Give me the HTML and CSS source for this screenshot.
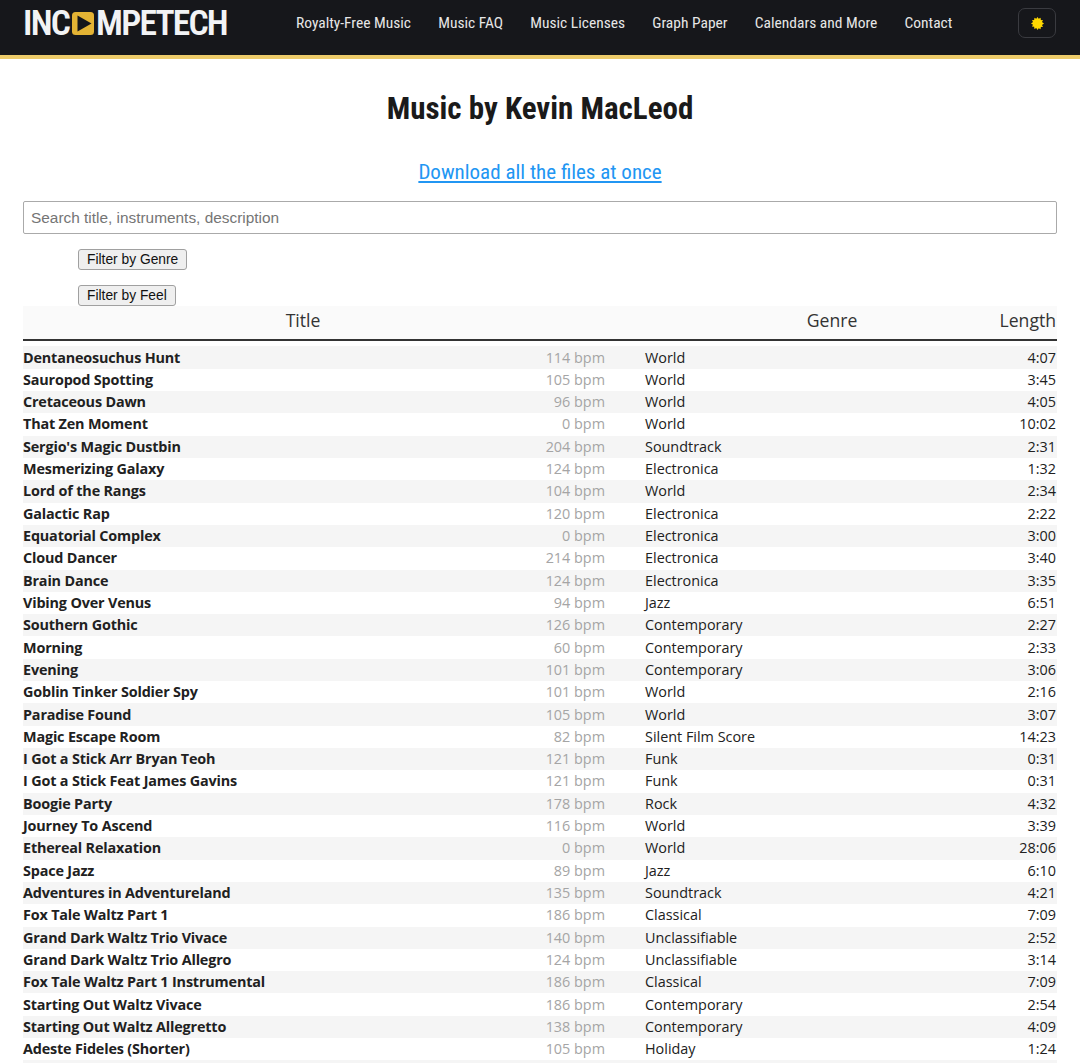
FILE: index.html
```html
<!DOCTYPE html>
<html lang="en">
<head>
<meta charset="utf-8">
<title>Music by Kevin MacLeod</title>
<link rel="stylesheet" href="styles.css">
</head>
<body>
<header class="topbar">
  <a class="logo" href="#"><span class="logo-text">INC</span><svg class="logo-o" viewBox="0 0 22 23" width="22" height="23"><rect width="22" height="23" rx="3.500" fill="#e3b334"/><path d="M5.500 3.500 L19.500 11.500 L5.500 19.500 Z" fill="#15161a"/></svg><span class="logo-text">MPETECH</span></a>
  <nav class="nav">
    <a href="#">Royalty-Free Music</a>
    <a href="#">Music FAQ</a>
    <a href="#">Music Licenses</a>
    <a href="#">Graph Paper</a>
    <a href="#">Calendars and More</a>
    <a href="#">Contact</a>
  </nav>
  <button class="theme" type="button"><svg viewBox="0 0 14 14" width="13" height="13"><path fill="#ffd800" d="M7 0l1.300 2 2-1.200.3 2.400 2.400.3L11.800 5.500 14 7l-2.200 1.500 1.200 2-2.400.3-.3 2.400-2-1.200L7 14l-1.300-2.200-2 1.200-.3-2.400-2.400-.3 1.200-2L0 7l2.200-1.500-1.200-2 2.400-.3.3-2.400 2 1.200z"/></svg></button>
</header>
<main class="page">
  <h1 class="title">Music by Kevin MacLeod</h1>
  <p class="download"><a href="#">Download all the files at once</a></p>
  <input class="search" type="text" placeholder="Search title, instruments, description">
  <div class="filters">
    <button type="button">Filter by Genre</button>
    <button type="button">Filter by Feel</button>
  </div>
  <div class="thead">
    <div class="th-title">Title</div>
    <div class="th-genre">Genre</div>
    <div class="th-length">Length</div>
  </div>
  <table class="tracks">
    <tbody>
      <tr><td class="t">Dentaneosuchus Hunt</td><td class="b">114 bpm</td><td class="g">World</td><td class="l">4:07</td></tr>
      <tr><td class="t">Sauropod Spotting</td><td class="b">105 bpm</td><td class="g">World</td><td class="l">3:45</td></tr>
      <tr><td class="t">Cretaceous Dawn</td><td class="b">96 bpm</td><td class="g">World</td><td class="l">4:05</td></tr>
      <tr><td class="t">That Zen Moment</td><td class="b">0 bpm</td><td class="g">World</td><td class="l">10:02</td></tr>
      <tr><td class="t">Sergio's Magic Dustbin</td><td class="b">204 bpm</td><td class="g">Soundtrack</td><td class="l">2:31</td></tr>
      <tr><td class="t">Mesmerizing Galaxy</td><td class="b">124 bpm</td><td class="g">Electronica</td><td class="l">1:32</td></tr>
      <tr><td class="t">Lord of the Rangs</td><td class="b">104 bpm</td><td class="g">World</td><td class="l">2:34</td></tr>
      <tr><td class="t">Galactic Rap</td><td class="b">120 bpm</td><td class="g">Electronica</td><td class="l">2:22</td></tr>
      <tr><td class="t">Equatorial Complex</td><td class="b">0 bpm</td><td class="g">Electronica</td><td class="l">3:00</td></tr>
      <tr><td class="t">Cloud Dancer</td><td class="b">214 bpm</td><td class="g">Electronica</td><td class="l">3:40</td></tr>
      <tr><td class="t">Brain Dance</td><td class="b">124 bpm</td><td class="g">Electronica</td><td class="l">3:35</td></tr>
      <tr><td class="t">Vibing Over Venus</td><td class="b">94 bpm</td><td class="g">Jazz</td><td class="l">6:51</td></tr>
      <tr><td class="t">Southern Gothic</td><td class="b">126 bpm</td><td class="g">Contemporary</td><td class="l">2:27</td></tr>
      <tr><td class="t">Morning</td><td class="b">60 bpm</td><td class="g">Contemporary</td><td class="l">2:33</td></tr>
      <tr><td class="t">Evening</td><td class="b">101 bpm</td><td class="g">Contemporary</td><td class="l">3:06</td></tr>
      <tr><td class="t">Goblin Tinker Soldier Spy</td><td class="b">101 bpm</td><td class="g">World</td><td class="l">2:16</td></tr>
      <tr><td class="t">Paradise Found</td><td class="b">105 bpm</td><td class="g">World</td><td class="l">3:07</td></tr>
      <tr><td class="t">Magic Escape Room</td><td class="b">82 bpm</td><td class="g">Silent Film Score</td><td class="l">14:23</td></tr>
      <tr><td class="t">I Got a Stick Arr Bryan Teoh</td><td class="b">121 bpm</td><td class="g">Funk</td><td class="l">0:31</td></tr>
      <tr><td class="t">I Got a Stick Feat James Gavins</td><td class="b">121 bpm</td><td class="g">Funk</td><td class="l">0:31</td></tr>
      <tr><td class="t">Boogie Party</td><td class="b">178 bpm</td><td class="g">Rock</td><td class="l">4:32</td></tr>
      <tr><td class="t">Journey To Ascend</td><td class="b">116 bpm</td><td class="g">World</td><td class="l">3:39</td></tr>
      <tr><td class="t">Ethereal Relaxation</td><td class="b">0 bpm</td><td class="g">World</td><td class="l">28:06</td></tr>
      <tr><td class="t">Space Jazz</td><td class="b">89 bpm</td><td class="g">Jazz</td><td class="l">6:10</td></tr>
      <tr><td class="t">Adventures in Adventureland</td><td class="b">135 bpm</td><td class="g">Soundtrack</td><td class="l">4:21</td></tr>
      <tr><td class="t">Fox Tale Waltz Part 1</td><td class="b">186 bpm</td><td class="g">Classical</td><td class="l">7:09</td></tr>
      <tr><td class="t">Grand Dark Waltz Trio Vivace</td><td class="b">140 bpm</td><td class="g">Unclassifiable</td><td class="l">2:52</td></tr>
      <tr><td class="t">Grand Dark Waltz Trio Allegro</td><td class="b">124 bpm</td><td class="g">Unclassifiable</td><td class="l">3:14</td></tr>
      <tr><td class="t">Fox Tale Waltz Part 1 Instrumental</td><td class="b">186 bpm</td><td class="g">Classical</td><td class="l">7:09</td></tr>
      <tr><td class="t">Starting Out Waltz Vivace</td><td class="b">186 bpm</td><td class="g">Contemporary</td><td class="l">2:54</td></tr>
      <tr><td class="t">Starting Out Waltz Allegretto</td><td class="b">138 bpm</td><td class="g">Contemporary</td><td class="l">4:09</td></tr>
      <tr><td class="t">Adeste Fideles (Shorter)</td><td class="b">105 bpm</td><td class="g">Holiday</td><td class="l">1:24</td></tr>
      <tr class="next"><td class="t"></td><td class="b"></td><td class="g"></td><td class="l"></td></tr>
    </tbody>
  </table>
</main>
</body>
</html>
```
FILE: styles.css
```css
* { box-sizing: border-box; }
html, body { margin: 0; padding: 0; }
body { background: #fff; color: #212121; font-family: "Open Sans", "Noto Sans", sans-serif; }

.topbar {
  display: flex;
  align-items: center;
  height: 59px;
  padding: 0 24px 9px 23px;
  background: #16171b;
  border-bottom: 4px solid #eccb6a;
}
.logo { display: flex; align-items: center; width: 207px; text-decoration: none; }
.logo-text {
  display: inline-block;
  color: #f2f3f5;
  font-family: "Roboto", sans-serif;
  font-stretch: condensed;
  font-size: 35.500px;
  font-weight: 600;
  line-height: 36px;
  letter-spacing: -1.800px;
}
.logo-o { flex: none; margin: 0 2px 0 3px; }
.nav { display: flex; gap: 27.200px; margin-left: 66px; flex: 1; }
.nav a {
  color: #e6e6e6;
  font-family: "Roboto", sans-serif;
  font-stretch: condensed;
  font-size: 15.500px;
  text-decoration: none;
  white-space: nowrap;
}
.theme {
  display: flex;
  align-items: center;
  justify-content: center;
  width: 38px;
  height: 30px;
  padding: 0;
  background: transparent;
  border: 1px solid #3a3b40;
  border-radius: 7px;
}

.page { padding: 0 23px; }
.title {
  margin: 31px 0 0;
  color: #1a1a1a;
  font-family: "Roboto", sans-serif;
  font-stretch: condensed;
  font-size: 31px;
  font-weight: 700;
  line-height: 38px;
  text-align: center;
}
.download { margin: 31px 0 0; text-align: center; font-family: "Roboto", sans-serif; font-stretch: condensed; font-size: 21px; line-height: 26px; }
.download a { color: #2196f3; }
.search {
  display: block;
  width: 100%;
  height: 33px;
  margin-top: 16px;
  padding: 0 7px;
  background: #fff;
  border: 1px solid #aaa;
  border-radius: 2px;
  font-family: "Liberation Sans", sans-serif;
  font-size: 15.400px;
}
.search::placeholder { color: #757575; }
.filters { display: flex; flex-direction: column; align-items: flex-start; gap: 15px; padding: 15px 0 0 55px; }
.filters button {
  height: 21px;
  padding: 0 8px;
  background: #efefef;
  border: 1px solid #a0a0a0;
  border-radius: 3px;
  color: #111;
  font-family: "Liberation Sans", sans-serif;
  font-size: 13.800px;
}
.thead {
  display: grid;
  grid-template-columns: 560px 1fr;
  column-gap: 24px;
  height: 35px;
  background: #fafafa;
  border-bottom: 2px solid #333;
  font-size: 17.600px;
  line-height: 28px;
  color: #333;
}
.th-title { grid-column: 1; grid-row: 1; text-align: center; }
.th-genre { grid-column: 2; grid-row: 1; text-align: center; }
.th-length { grid-column: 2; grid-row: 1; text-align: right; padding-right: 1px; }

.tracks {
  width: 100%;
  margin-top: 5.400px;
  border-collapse: collapse;
  table-layout: fixed;
  font-size: 14.400px;
}
.tracks tr { height: 22.320px; }
.tracks tr:nth-child(odd) { background: #f5f5f5; }
.tracks td { padding: 0; line-height: 22px; white-space: nowrap; }
.t { width: 500px; font-weight: 700; letter-spacing: -0.170px; }
.b { width: 82px; color: #a5a5a5; text-align: right; }
.g { padding-left: 40px !important; width: 400px; }
.l { text-align: right; padding-right: 1px !important; }
```
